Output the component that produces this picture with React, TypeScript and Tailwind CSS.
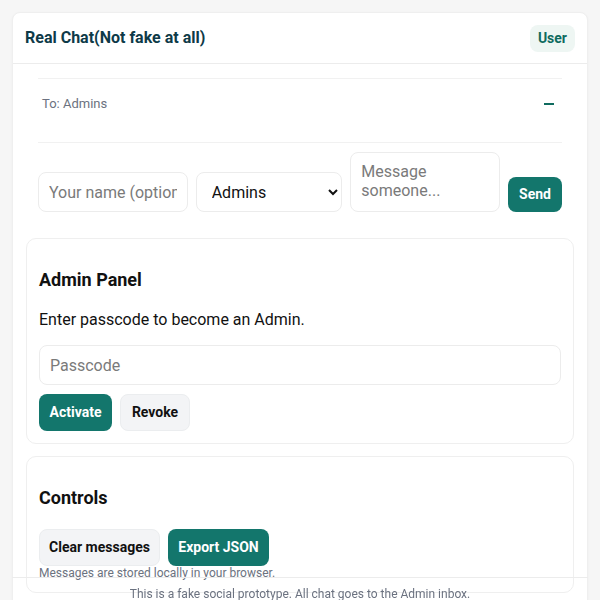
import React from "react";

export default function App() {
  return (
    <div
      className="min-h-[600px] bg-[#f6f6f6] pt-3 px-3 pb-10"
      style={{ fontFamily: "Roboto, 'Liberation Sans', sans-serif" }}
    >
      <div className="bg-white rounded-lg border border-[#efefef] shadow-[0_1px_3px_rgba(0,0,0,0.04)]">
        {/* Header */}
        <div className="flex items-center justify-between h-[51px] px-3 border-b border-[#ececec]">
          <div className="text-[16px] font-bold text-[#0e3a48]">Real Chat(Not fake at all)</div>
          <div className="h-[27px] px-[8px] flex items-center rounded-lg bg-[#eef6f3] text-[14px] font-bold text-[#0f6b5f]">
            User
          </div>
        </div>

        {/* Body */}
        <div className="px-[13px] pt-[14px] pb-4">
          <div className="px-3">
            {/* Messages area */}
            <div className="h-[65px] border-y border-[#f1f1f1] px-1 pt-[13px]">
              <div className="flex items-center justify-between h-[24px]">
                <span className="text-[13px] text-[#6b7280]">To: Admins</span>
                <span className="w-[10px] h-[2px] bg-[#0f6b5f] mr-[4px]" />
              </div>
            </div>

            {/* Composer */}
            <div className="flex items-end gap-2 mt-[9px]">
              <input
                className="flex-1 min-w-0 h-[40px] rounded-lg border border-[#ececec] bg-white px-[10px] text-[16px] text-[#111] placeholder:text-[#7a7a7a] outline-none"
                placeholder="Your name (optional)"
              />
              <select
                className="flex-1 min-w-0 h-[40px] rounded-lg border border-[#ececec] bg-white pl-[11px] pr-[6px] text-[16px] text-[#111] outline-none"
                defaultValue="Admins"
              >
                <option>Admins</option>
              </select>
              <textarea
                className="flex-1 min-w-0 h-[60px] rounded-lg border border-[#ececec] bg-white px-[10px] py-[9px] text-[16px] leading-[19px] text-[#111] placeholder:text-[#7a7a7a] outline-none resize-none"
                placeholder="Message someone..."
              />
              <button className="h-[35px] w-[54px] rounded-lg bg-[#13766c] text-white text-[14px] font-bold">
                Send
              </button>
            </div>
          </div>

          {/* Admin Panel */}
          <div className="mt-[26px] rounded-[10px] border border-[#efefef] px-3 pt-[27px] pb-3">
            <div className="text-[18px] leading-[28px] font-bold text-[#111]">Admin Panel</div>
            <div className="mt-[14px] text-[16px] leading-[24px] text-[#111]">
              Enter passcode to become an Admin.
            </div>
            <input
              className="mt-[13px] block w-full h-[40px] rounded-lg border border-[#ececec] bg-white px-[10px] text-[16px] text-[#111] placeholder:text-[#7a7a7a] outline-none"
              placeholder="Passcode"
            />
            <div className="flex gap-2 mt-[9px]">
              <button className="h-[37px] w-[73px] rounded-lg bg-[#13766c] text-white text-[14px] font-bold">
                Activate
              </button>
              <button className="h-[37px] w-[70px] rounded-lg bg-[#f3f4f6] border border-[#ebedef] text-[#111] text-[14px] font-bold">
                Revoke
              </button>
            </div>
          </div>

          {/* Controls */}
          <div className="mt-[12px] rounded-[10px] border border-[#efefef] px-3 pt-[27px] pb-3">
            <div className="text-[18px] leading-[28px] font-bold text-[#111]">Controls</div>
            <div className="flex gap-2 mt-[17px]">
              <button className="h-[37px] w-[121px] rounded-lg bg-[#f3f4f6] border border-[#ebedef] text-[#111] text-[14px] font-bold">
                Clear messages
              </button>
              <button className="h-[37px] w-[101px] rounded-lg bg-[#13766c] text-white text-[14px] font-bold">
                Export JSON
              </button>
            </div>
            <div className="text-[12px] leading-[14px] text-[#6b7280]">
              Messages are stored locally in your browser.
            </div>
          </div>
        </div>
      </div>

      {/* Footer */}
      <div className="fixed bottom-0 left-3 right-3 h-[23px] border-t border-[#ececec] flex justify-center pt-[8px]">
        <span className="text-[12px] leading-[16px] text-[#6b7280]">
          This is a fake social prototype. All chat goes to the Admin inbox.
        </span>
      </div>
    </div>
  );
}
